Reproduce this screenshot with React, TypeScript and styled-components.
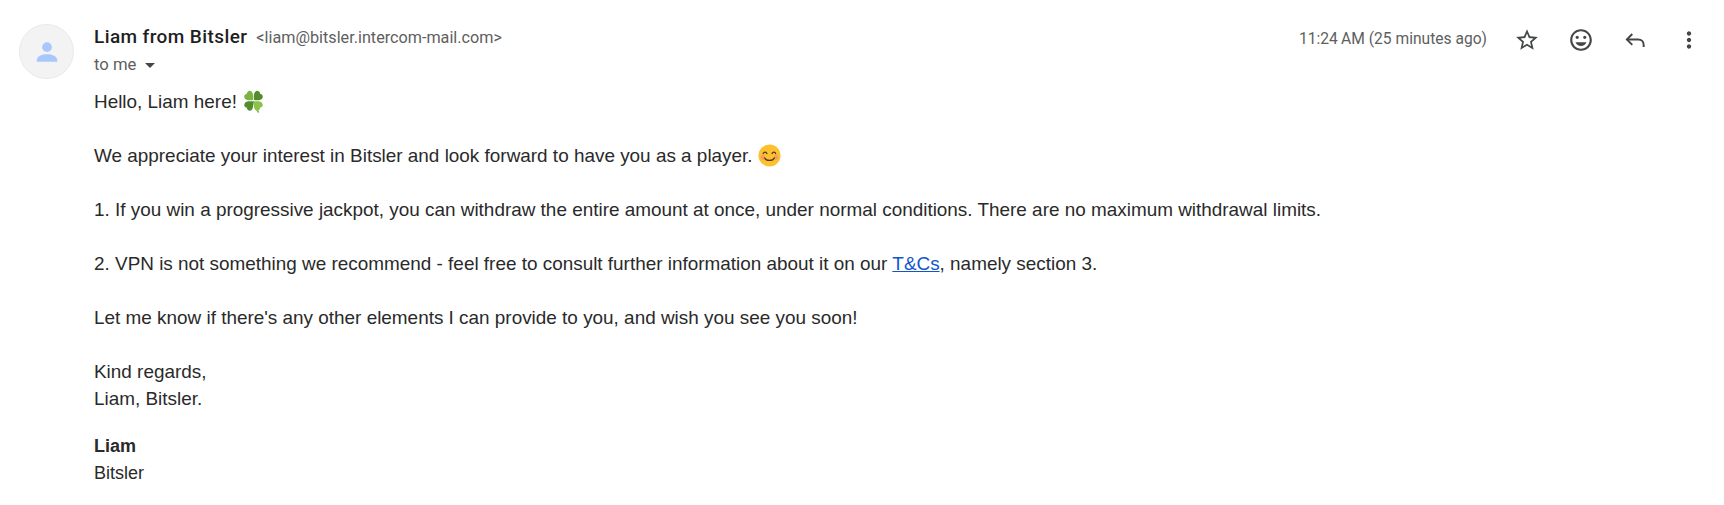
import React from "react";
import styled, { createGlobalStyle } from "styled-components";
import { MdStarBorder, MdOutlineMood, MdMoreVert } from "react-icons/md";

const GlobalStyle = createGlobalStyle`
  html, body {
    margin: 0;
    padding: 0;
    background: #fff;
  }
`;

const Clover = () => (
  <EmojiSvg viewBox="0 0 24 24" aria-hidden="true">
    <path d="M12 12c1 4 2.500 7.500 5 11" fill="none" stroke="#7cb342" strokeWidth="1.600" strokeLinecap="round" />
    <path d="M11.500 10.500C8 11 3.500 11 2.500 8 1.800 5.500 3.500 4 5 4.300 5 2 7 .5 9 1c2.500.8 3 5 2.500 9.500z" fill="#7cb342" />
    <path d="M12.500 10.500c3.500.5 8 .5 9-2.500.7-2.500-1-4-2.500-3.700 0-2.300-2-3.800-4-3.300-2.500.8-3 5-2.500 9.500z" fill="#558b2f" />
    <path d="M11.500 12C8 11.500 3.500 11.500 2.500 14.500 1.800 17 3.500 18.500 5 18.200 5 20.500 7 22 9 21.500c2.500-.8 3-5 2.500-9.500z" fill="#558b2f" />
    <path d="M12.500 12c3.500-.5 8-.5 9 2.500.7 2.500-1 4-2.500 3.700 0 2.300-2 3.800-4 3.300-2.500-.8-3-5-2.500-9.500z" fill="#8bc34a" />
  </EmojiSvg>
);

const Smile = () => (
  <EmojiSvg viewBox="0 0 24 24" aria-hidden="true">
    <circle cx="12" cy="12" r="11.500" fill="#fdc02f" />
    <circle cx="5" cy="14" r="2.400" fill="#f48f6a" opacity="0.7" />
    <circle cx="19" cy="14" r="2.400" fill="#f48f6a" opacity="0.7" />
    <path d="M5.500 10c.8-2 3-2 3.800 0M14.700 10c.8-2 3-2 3.800 0" fill="none" stroke="#4e342e" strokeWidth="1.300" strokeLinecap="round" />
    <path d="M7 14.500c1.500 3.500 8.500 3.500 10 0" fill="none" stroke="#4e342e" strokeWidth="1.300" strokeLinecap="round" />
  </EmojiSvg>
);

const App: React.FC = () => {
  return (
    <Page>
      <GlobalStyle />
      <AvatarColumn>
        <Avatar>
          <svg width="26" height="26" viewBox="0 0 24 24" aria-hidden="true">
            <circle cx="12" cy="7.500" r="4.500" fill="#a8c7fa" />
            <path d="M2.500 20c0-4.500 5-6 9.500-6s9.500 1.500 9.500 6v1h-19z" fill="#a8c7fa" />
          </svg>
        </Avatar>
      </AvatarColumn>
      <Main>
        <Header>
          <div>
            <SenderRow>
              <SenderName>Liam from Bitsler</SenderName>
              <SenderMail>&lt;liam@bitsler.intercom-mail.com&gt;</SenderMail>
            </SenderRow>
            <ToRow>
              to me
              <Caret />
            </ToRow>
          </div>
          <Actions>
            <Time>11:24{"\u2009"}AM (25 minutes ago)</Time>
            <IconButton><MdStarBorder size={26} /></IconButton>
            <IconButton><MdOutlineMood size={26} /></IconButton>
            <IconButton>
              <svg width="26" height="26" viewBox="0 0 24 24" fill="none" stroke="currentColor" strokeWidth="1.800" aria-hidden="true">
                <path d="M9.500 6.500L4.500 11.500l5 5" />
                <path d="M4.500 11.500H15c3 0 5 2 5 5v2" />
              </svg>
            </IconButton>
            <IconButton><MdMoreVert size={26} /></IconButton>
          </Actions>
        </Header>
        <Body>
          <Line>Hello, Liam here! <Clover /></Line>
          <Gap />
          <Line>We appreciate your interest in Bitsler and look forward to have you as a player. <Smile /></Line>
          <Gap />
          <Line>1. If you win a progressive jackpot, you can withdraw the entire amount at once, under normal conditions. There are no maximum withdrawal limits.</Line>
          <Gap />
          <Line>2. VPN is not something we recommend - feel free to consult further information about it on our <MailLink href="#">T&amp;Cs</MailLink>, namely section 3.</Line>
          <Gap />
          <Line>Let me know if there's any other elements I can provide to you, and wish you see you soon!</Line>
          <Gap />
          <Line>Kind regards,</Line>
          <Line>Liam, Bitsler.</Line>
          <SignatureGap />
          <Signature>
            <strong>Liam</strong>
            <span>Bitsler</span>
          </Signature>
        </Body>
      </Main>
    </Page>
  );
};

const Page = styled.div`
  display: flex;
  width: 1724px;
  height: 505px;
  box-sizing: border-box;
  overflow: hidden;
  padding: 24px 0 0 19px;
  background: #fff;
`;

const AvatarColumn = styled.div`
  width: 75px;
  flex: none;
`;

const Avatar = styled.div`
  width: 55px;
  height: 55px;
  box-sizing: border-box;
  border-radius: 50%;
  background: #f3f3f4;
  border: 1px solid #e8e9ec;
  display: flex;
  align-items: center;
  justify-content: center;
`;

const Main = styled.div`
  flex: 1;
  min-width: 0;
`;

const Header = styled.div`
  display: flex;
  justify-content: space-between;
  align-items: flex-start;
  height: 64px;
`;

const SenderRow = styled.div`
  display: flex;
  align-items: baseline;
  gap: 9px;
  height: 24px;
  margin-top: 1px;
  font-family: Roboto, sans-serif;
`;

const SenderName = styled.span`
  font-size: 19px;
  font-weight: 500;
  letter-spacing: 0.4px;
  color: #1f1f1f;
`;

const SenderMail = styled.span`
  font-size: 16.200px;
  color: #5e5e5e;
`;

const ToRow = styled.div`
  display: flex;
  align-items: center;
  height: 30px;
  font-family: Roboto, sans-serif;
  font-size: 16.700px;
  color: #5e5e5e;
`;

const Caret = styled.span`
  margin-left: 9px;
  margin-top: 2px;
  border-left: 5px solid transparent;
  border-right: 5px solid transparent;
  border-top: 5px solid #444746;
`;

const Actions = styled.div`
  display: flex;
  align-items: center;
  padding: 2px 8px 0 0;
`;

const Time = styled.span`
  font-family: Roboto, sans-serif;
  font-size: 15.600px;
  color: #5e5e5e;
  margin: -3px 13px 0 0;
`;

const IconButton = styled.span`
  width: 54px;
  height: 28px;
  display: flex;
  align-items: center;
  justify-content: center;
  color: #444746;
`;

const Body = styled.div`
  font-family: "Liberation Sans", Arial, sans-serif;
  font-size: 18.920px;
  line-height: 27px;
  color: #2a2a2a;
`;

const Line = styled.div`
  height: 27px;
  white-space: nowrap;
`;

const Gap = styled.div`
  height: 27px;
`;

const SignatureGap = styled.div`
  height: 21px;
`;

const EmojiSvg = styled.svg`
  width: 23px;
  height: 23px;
  vertical-align: -5px;
`;

const MailLink = styled.a`
  color: #1155cc;
  text-decoration: underline;
`;

const Signature = styled.div`
  display: flex;
  flex-direction: column;
  font-size: 18px;
  line-height: 27px;
  strong {
    font-weight: 700;
  }
`;

export default App;
